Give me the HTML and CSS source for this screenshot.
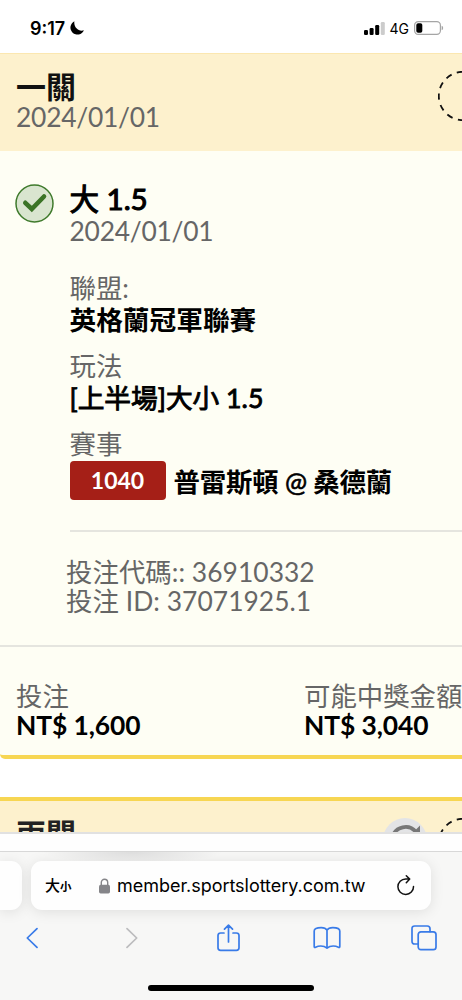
FILE: index.html
```html
<!DOCTYPE html>
<html lang="zh-Hant">
<head>
<meta charset="utf-8">
<meta name="viewport" content="width=device-width">
<title>投注紀錄</title>
<link rel="stylesheet" href="styles.css">
</head>
<body>
<div class="phone">
  <header class="status">
    <div class="clock"><span class="time">9:17</span>
      <svg class="moon" width="14" height="14" viewBox="0 0 14 14"><path d="M4.400.3A7 7 0 1 0 13.900 9.300C8.900 11.200 3.300 6.400 4.400.3Z"/></svg>
    </div>
    <div class="signals">
      <svg class="bars" width="21" height="13" viewBox="0 0 21 13"><rect x="0" y="8" width="4" height="5" rx="1.2"/><rect x="5.600" y="6" width="4" height="7" rx="1.2"/><rect x="11.200" y="3" width="4" height="10" rx="1.2"/><rect x="16.800" y="0" width="4" height="13" rx="1.2" fill="#ccc"/></svg>
      <span class="net">4G</span>
      <svg class="battery" width="30" height="14" viewBox="0 0 30 14"><rect x=".6" y=".6" width="25.800" height="12.800" rx="3.600" fill="none" stroke="#a5a5a5" stroke-width="1.2"/><rect x="2.300" y="2.200" width="6" height="9.600" rx="1.800"/><path d="M27.600 4.800q1.600.5 1.600 2.200t-1.600 2.200z" fill="#a5a5a5"/></svg>
    </div>
  </header>

  <main class="page">
    <section class="card first">
      <div class="card-head">
        <div>
          <div class="title">一關</div>
          <div class="date">2024/01/01</div>
        </div>
        <svg class="ring" width="50" height="50" viewBox="0 0 50 50"><circle cx="25" cy="25" r="24.200" transform="rotate(4 25 25)"/></svg>
      </div>
      <div class="bet">
        <svg class="check" width="39" height="39" viewBox="0 0 39 39"><circle cx="19.500" cy="19.500" r="18.500" fill="#d9e5cf" stroke="#3f7a2c" stroke-width="1.500"/><path d="M10.300 18.800 16.800 25 29 12.500" fill="none" stroke="#3b7426" stroke-width="4.600" stroke-linecap="round"/></svg>
        <div class="info">
          <div class="pick">大 1.5</div>
          <div class="date pick-date">2024/01/01</div>
          <div class="label">聯盟:</div>
          <div class="value">英格蘭冠軍聯賽</div>
          <div class="label">玩法</div>
          <div class="value play">[上半場]大小 1.5</div>
          <div class="label">賽事</div>
          <div class="match"><span class="badge">1040</span><span class="teams">普雷斯頓 <span class="at">@</span> 桑德蘭</span></div>
          <div class="codes">
            <div>投注代碼:: 36910332</div>
            <div class="bet-id">投注 ID: 37071925.1</div>
          </div>
        </div>
      </div>
      <div class="totals">
        <div class="total"><div class="total-label">投注</div><div class="money">NT$ 1,600</div></div>
        <div class="total"><div class="total-label">可能中獎金額</div><div class="money">NT$ 3,040</div></div>
      </div>
    </section>

    <section class="card second">
      <div class="card-head">
        <div class="title">兩關</div>
        <div class="actions">
          <svg class="refresh" width="44" height="44" viewBox="0 0 44 44"><circle cx="22" cy="22" r="22" fill="#e3e4e6"/><path d="M9.500 19A13.500 13.500 0 0 1 33 14" fill="none" stroke="#777" stroke-width="3.800"/><path d="M37 7.500V19H25.500Z" fill="#777"/></svg>
          <svg class="ring" width="50" height="50" viewBox="0 0 50 50"><circle cx="25" cy="25" r="24.200" transform="rotate(4 25 25)"/></svg>
        </div>
      </div>
    </section>
    <div class="footer-strip"></div>
  </main>

  <footer class="browser">
    <div class="tabs">
      <div class="tab previous"></div>
      <div class="tab address">
        <span class="textsize"><span class="big">大</span><span class="small">小</span></span>
        <svg class="lock" width="11" height="16" viewBox="0 0 11 16"><path d="M2.300 8V4.500a3.200 3.200 0 0 1 6.400 0V8" fill="none" stroke="#858589" stroke-width="1.400"/><rect x="0" y="6.800" width="11" height="8.700" rx="1.700" fill="#858589"/></svg>
        <span class="url">member.sportslottery.com.tw</span>
        <svg class="reload" width="18" height="21" viewBox="0 0 18 21"><path d="M16.500 11.500A7.800 7.800 0 1 1 8.700 3.900L12.400 4M9.300.8 12.700 4.100 9.300 7.800" fill="none" stroke="#111" stroke-width="1.500" stroke-linecap="round" stroke-linejoin="round"/></svg>
      </div>
    </div>
    <nav class="tools">
      <svg width="12" height="22" viewBox="0 0 12 22"><path d="M11 1.600 1.300 11 11 20.400"/></svg>
      <svg class="off" width="12" height="22" viewBox="0 0 12 22"><path d="M1 1.600 10.700 11 1 20.400"/></svg>
      <svg width="23" height="28" viewBox="0 0 23 28"><path d="M7 9H3.600Q1 9 1 11.600V23.800Q1 26.400 3.600 26.400H19.400Q22 26.400 22 23.800V11.600Q22 9 19.400 9H16M11.500 18V1.500M7.500 5.200 11.500 1.200 15.500 5.200"/></svg>
      <svg width="28" height="24" viewBox="0 0 28 24"><path d="M14 4.200Q12.500 1.600 8.200 1.600Q1.200 1.600 1.200 5V20.500Q1.200 22 2.600 21.200Q5 20 7.800 20Q11.500 20 14 22.200Q16.500 20 20.200 20Q23 20 25.400 21.200Q26.800 22 26.800 20.500V5Q26.800 1.600 19.800 1.600Q15.500 1.600 14 4.200V22"/></svg>
      <svg width="26" height="26" viewBox="0 0 26 26"><rect x="7.200" y="6.800" width="17.800" height="17.800" rx="2.700"/><path d="M7 19H3.700Q1 19 1 16.300V3.700Q1 1 3.700 1H16.300Q19 1 19 3.700V6.600"/></svg>
    </nav>
    <div class="home"></div>
  </footer>
</div>
</body>
</html>
```
FILE: styles.css
```css
* { box-sizing: border-box; }
body {
  margin: 0;
  background: #fff;
  font-family: Lato, "Noto Sans CJK TC", sans-serif;
  font-size: 26.4px;
  color: #666;
}
.phone {
  width: 462px;
  height: 1000px;
  overflow: hidden;
  display: flex;
  flex-direction: column;
  white-space: nowrap;
}
svg { display: block; flex: none; }

.status {
  height: 53px;
  flex: none;
  display: flex;
  justify-content: space-between;
  padding: 16px 18px 0 30px;
  font-family: Inter, sans-serif;
  color: #000;
}
.clock, .signals { display: flex; align-items: center; height: 24px; }
.time { font-size: 18px; font-weight: 600; }
.moon { margin-left: 5px; }
.net { font-size: 14px; font-weight: 400; margin: 0 5px 0 5px; }

.page { height: 798px; flex: none; overflow: hidden; display: flex; flex-direction: column; }
.card { flex: none; background: #fefef4; }
.first {
  height: 706px;
  border-bottom: 4px solid #f7d652;
  border-radius: 0 0 0 5px;
  overflow: hidden;
}
.card-head {
  display: flex;
  justify-content: space-between;
  height: 98px;
  padding: 17px 0 0 16px;
  background: #fdf1cd;
  border-top: 1px solid #fbe7b0;
  overflow: hidden;
}
.title { font-size: 30px; line-height: 30px; font-weight: 700; color: #111; }
.date { line-height: 33px; letter-spacing: -.24px; }
.ring { margin-right: -26px; fill: none; stroke: #111; stroke-width: 1.8; stroke-dasharray: 6.200 5.500; }

.bet { display: flex; height: 496px; padding: 32px 0 0 15px; border-bottom: 2px solid #e5e5df; }
.check { margin: 1px 15.5px 0 0; }
.info { flex: 1; }
.pick { font-size: 29.5px; line-height: 31px; font-weight: 400; -webkit-text-stroke: 1.1px #000; color: #000; }
.pick-date { line-height: 34px; margin-bottom: 24px; }
.label { line-height: 32px; }
.value { line-height: 32px; font-size: 26.7px; font-weight: 700; color: #000; margin-bottom: 14px; }
.play { font-weight: 400; -webkit-text-stroke: .9px #000; }
.match { display: flex; gap: 8px; height: 72px; padding-top: 1px; border-bottom: 2px solid #e5e5df; margin-bottom: 26px; line-height: 42px; font-weight: 700; color: #000; }
.teams { letter-spacing: -.1px; }
.at { font-weight: 400; -webkit-text-stroke: .6px #000; }
.badge { width: 96px; height: 39px; border-radius: 4px; background: #a51f17; color: #fff; text-align: center; font-size: 23px; line-height: 39px; }
.codes { line-height: 29px; margin-left: -3.5px; letter-spacing: .05px; }

.totals { display: flex; padding: 33px 0 0 16px; }
.total { width: 288px; flex: none; }
.total-label { line-height: 32px; }
.money { line-height: 26px; font-weight: 700; color: #000; letter-spacing: -.1px; }

.second {
  height: 35px;
  margin-top: 38px;
  border-top: 4px solid #f7d652;
  overflow: hidden;
}
.second .card-head { border-top: 0; }
.second .title { color: #222; }
.actions { display: flex; gap: 11px; }
.footer-strip { height: 19px; flex: none; border-top: 2px solid #e1e1e1; background: #fefefe; }

.browser {
  flex: 1;
  background: #f7f7f6;
  border-top: 1px solid #d8d8d8;
  display: flex;
  flex-direction: column;
  align-items: center;
}
.tabs { display: flex; gap: 9px; width: 462px; padding-top: 9px; background: radial-gradient(ellipse 90px 12px at 132px 0, #dedede, transparent); }
.tab { height: 49px; background: #fefefe; box-shadow: 0 2px 14px rgba(0, 0, 0, .1); }
.previous { width: 22px; border-radius: 0 11px 11px 0; }
.address { width: 400px; border-radius: 11px; display: flex; align-items: center; padding: 0 16px 0 14px; color: #000; }
.textsize { display: flex; align-items: baseline; width: 54px; font-family: "Noto Sans CJK TC", sans-serif; font-weight: 500; line-height: 20px; }
.big { font-size: 15px; }
.small { font-size: 11.500px; font-weight: 700; }
.url { font-family: Inter, sans-serif; font-size: 18px; margin-left: 7px; letter-spacing: -.03px; }
.reload { margin-left: auto; }
.tools { display: grid; grid-template-columns: 100px 91px 96px 98px 26px; align-items: center; width: 462px; height: 56px; padding-left: 26px; }
.tools svg { fill: none; stroke: #397be8; stroke-width: 1.7; stroke-linecap: round; stroke-linejoin: round; }
.tools .off { stroke: #bcbcbe; }
.home { width: 166px; height: 6px; border-radius: 3px; background: #000; margin-top: 19px; }
```
